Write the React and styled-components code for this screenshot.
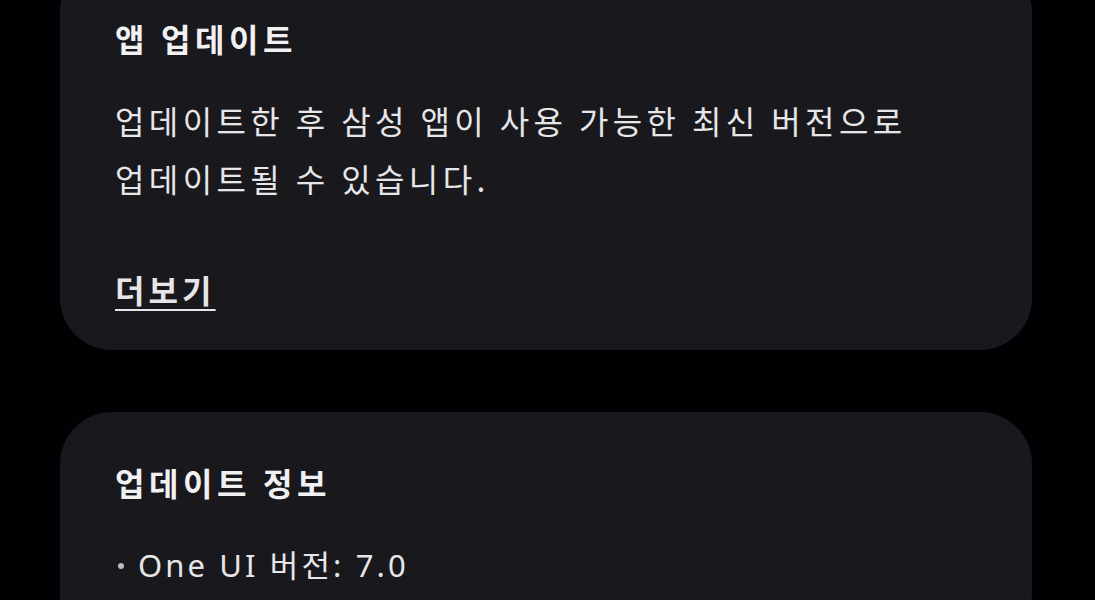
import React from "react";
import styled, { createGlobalStyle } from "styled-components";

const Global = createGlobalStyle`
  html, body { margin: 0; padding: 0; background: #000; overflow: hidden; }
  body { font-family: "Noto Sans CJK KR", "Noto Sans", sans-serif; }
`;

const Page = styled.div`
  width: 1095px;
  height: 600px;
  background: #010104;
  overflow: hidden;
`;

const Column = styled.div`
  display: flex;
  flex-direction: column;
  gap: 62px;
  margin-top: -40px;
  padding-left: 60px;
  width: 972px;
`;

const Card = styled.section`
  background: #19181d;
  border-radius: 52px;
  padding: ${(p) => p.$pad};
  display: flex;
  flex-direction: column;
  color: #f1f1f3;
`;

const Title = styled.h2`
  margin: 0;
  font-size: 32px;
  font-weight: 700;
  line-height: 40px;
  letter-spacing: 4.6px;
`;

const Body = styled.p`
  margin: ${(p) => p.$m};
  font-size: 32px;
  font-weight: 400;
  line-height: 58px;
  letter-spacing: 4.4px;
  color: #e6e6e9;
`;

const More = styled.a`
  margin-top: ${(p) => p.$mt};
  font-size: 32px;
  font-weight: 700;
  line-height: 40px;
  letter-spacing: 4.1px;
  color: #e6e6e9;
  text-decoration: underline;
  text-underline-offset: 6px;
  text-decoration-thickness: 2px;
  align-self: flex-start;
`;

const Bullet = styled.div`
  margin-top: ${(p) => p.$mt};
  display: flex;
  align-items: center;
  font-family: "Noto Sans", "Noto Sans CJK KR", sans-serif;
  font-size: 31px;
  line-height: 40px;
  letter-spacing: 3.1px;
  color: #e6e6e9;
`;

const Dot = styled.span`
  width: 6px;
  height: 6px;
  border-radius: 50%;
  background: #b9b9be;
  margin: 2px 14px 0 3px;
`;

export default function App() {
  return (
    <Page>
      <Global />
      <Column>
        <Card $pad="58px 55px 41px">
          <Title>앱 업데이트</Title>
          <Body $m="33px 0 0">
            업데이트한 후 삼성 앱이 사용 가능한 최신 버전으로
            <br />
            업데이트될 수 있습니다.
          </Body>
          <More $mt="62px">더보기</More>
        </Card>
        <Card $pad="50px 55px 60px">
          <Title>업데이트 정보</Title>
          <Bullet $mt="43px">
            <Dot />
            One UI 버전: 7.0
          </Bullet>
        </Card>
      </Column>
    </Page>
  );
}
